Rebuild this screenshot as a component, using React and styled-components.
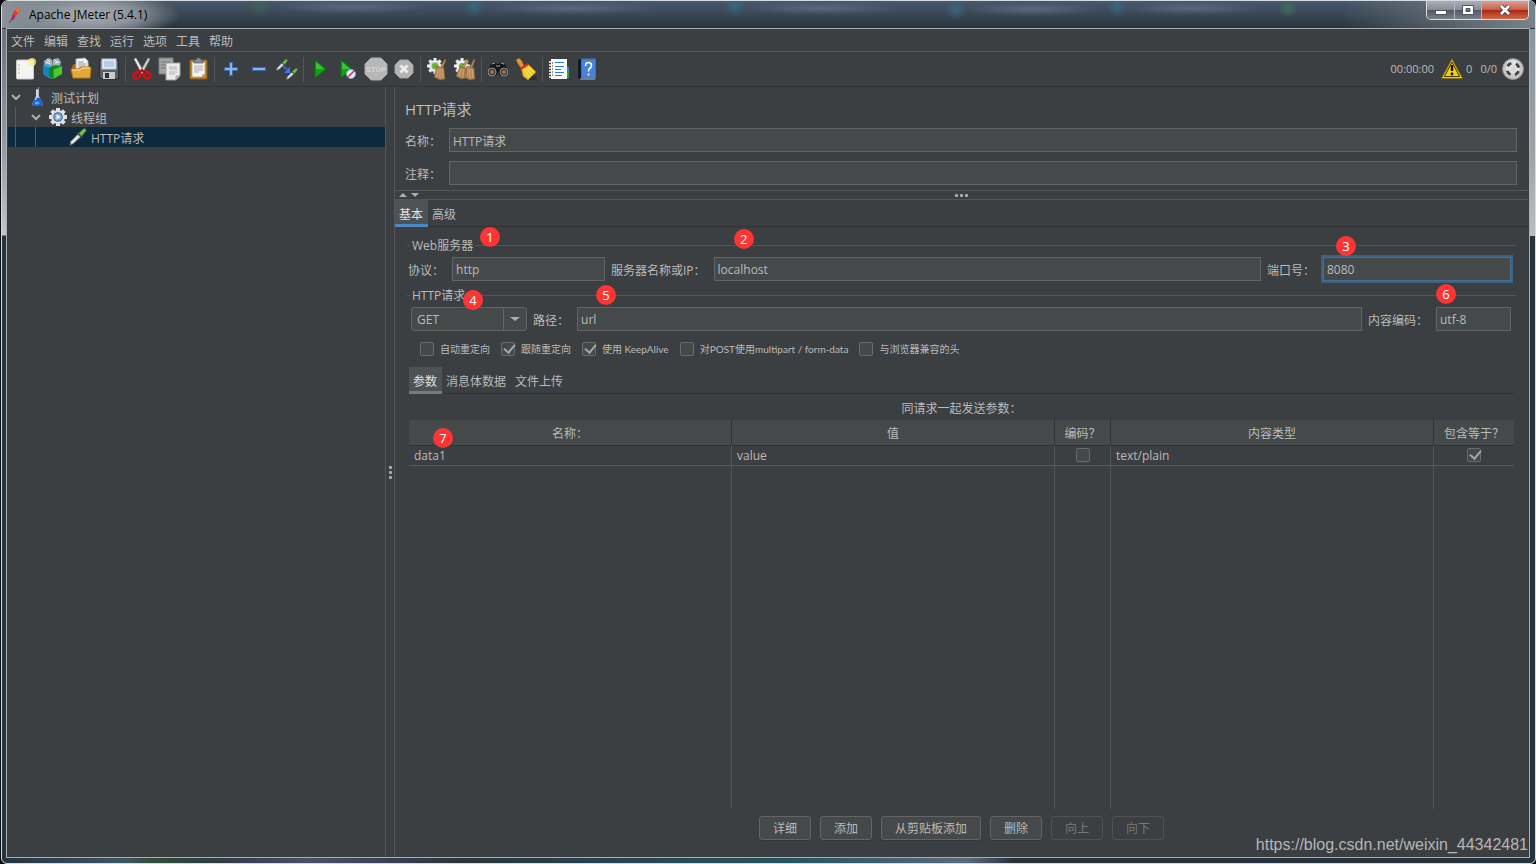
import React, { useState } from "react";
import styled, { createGlobalStyle } from "styled-components";

const GlobalStyle = createGlobalStyle`
  * { box-sizing: border-box; }
  body {
    margin: 0;
    background: #0b0d10;
    color: #bbbbbb;
    font: 12px/16px "Open Sans", "Noto Sans CJK SC", sans-serif;
  }
  button, input, select {
    font: inherit;
    color: inherit;
  }
`;

/* ---------- toolbar icons ---------- */

const NewIcon = () => (
  <svg width="24" height="24" viewBox="0 0 24 24">
    <rect x="3.500" y="3" width="17" height="19" rx="1" fill="#f4f4f2" stroke="#c9c9c6" />
    <path d="M5.5 8h1M5.5 12h1M5.5 16h1" stroke="#777" />
    <circle cx="19" cy="5" r="4" fill="#f7f0a0" opacity=".8" />
    <circle cx="19" cy="5" r="2" fill="#ffe94a" />
    <circle cx="19" cy="5" r="1" fill="#fff" />
  </svg>
);

const TemplatesIcon = () => (
  <svg width="24" height="24" viewBox="0 0 24 24">
    <path d="M4 9L3 4l5-3 3 2 1 7zM11 9l1-6 5-2 3 4-2 6z" fill="#a9b5bd" stroke="#74828c" />
    <path d="M6 2l3 3M13 2l4 4M5 5l4 2M14 6l4-1" stroke="#e9f0f4" />
    <path d="M2 8l5-1 6 4v11l-5-1-6-4z" fill="#2aa9d8" />
    <path d="M2 8l6 3v10l-6-4z" fill="#1682b8" />
    <path d="M8 11l6-3 7 1v8l-9 5-4-2z" fill="#12891e" />
    <path d="M12 13l9-4v8l-9 5z" fill="#4cc832" />
    <path d="M8 11l4 2v9" fill="none" stroke="#0b7a18" />
  </svg>
);

const OpenIcon = () => (
  <svg width="24" height="24" viewBox="0 0 24 24">
    <path d="M3 9l2-2h15v14H4z" fill="#a86d13" />
    <path d="M7 2l9-1 3 3v11H7z" fill="#f5f5f5" stroke="#aaa" />
    <path d="M9 5h6M9 7h8M9 9h8M9 11h8" stroke="#999" />
    <path d="M2 12h8l2-2h9l1 1-1 10H4z" fill="#e2a838" stroke="#b87b17" />
    <path d="M3 13h8l2-2h8" fill="none" stroke="#ffe19a" />
  </svg>
);

const SaveIcon = () => (
  <svg width="24" height="24" viewBox="0 0 24 24">
    <path d="M2.500 3h19v19H5l-2.500-2z" fill="#5d6062" stroke="#2b2d2e" />
    <rect x="5" y="2" width="14" height="10" fill="#dfeaf6" stroke="#b9c8d8" />
    <path d="M7 5h10M7 7h10M7 9h10" stroke="#8fb0d6" />
    <rect x="6" y="15" width="12" height="7" fill="#c9cccd" />
    <rect x="8" y="16" width="4" height="5" fill="#2e3133" />
  </svg>
);

const CutIcon = () => (
  <svg width="24" height="24" viewBox="0 0 24 24">
    <path d="M4 2l2-1 8 14-2 2z" fill="#f1f1f1" stroke="#999" strokeWidth=".6" />
    <path d="M20 2l-2-1-8 14 2 2z" fill="#d2d2d2" stroke="#888" strokeWidth=".6" />
    <ellipse cx="7" cy="18" rx="3" ry="3.600" transform="rotate(45 7 18)" fill="none" stroke="#d40f13" strokeWidth="2.800" />
    <ellipse cx="17" cy="18" rx="3" ry="3.600" transform="rotate(-45 17 18)" fill="none" stroke="#d40f13" strokeWidth="2.800" />
    <path d="M9 16l3-3 3 3" fill="none" stroke="#b00c10" strokeWidth="2" />
  </svg>
);

const CopyIcon = () => (
  <svg width="24" height="24" viewBox="0 0 24 24">
    <path d="M1 1h14v16H1z" fill="#a3a4a1" stroke="#81827f" />
    <path d="M3 5h9M3 8h9M3 11h6" stroke="#777" />
    <path d="M8 6h14v13l-4 4H8z" fill="#ececea" stroke="#a0a09d" />
    <path d="M11 10h8M11 12h8M11 15h8M11 17h6" stroke="#b0b0ae" />
    <path d="M18 23v-4h4z" fill="#c5c5c3" stroke="#8b8b88" strokeWidth=".7" />
  </svg>
);

const PasteIcon = () => (
  <svg width="24" height="24" viewBox="0 0 24 24">
    <rect x="4" y="3" width="17" height="19" rx="1" fill="#c88621" stroke="#8e5a10" />
    <path d="M6 5h13v12l-3 3H6z" fill="#f4f4f2" stroke="#999" strokeWidth=".7" />
    <path d="M8 9h9M8 11h9M8 13h9M8 15h5" stroke="#aaa" />
    <path d="M8 3h2l1-2h3l1 2h2v3H8z" fill="#8d8f8c" stroke="#555" strokeWidth=".7" />
    <path d="M16 20v-3h3z" fill="#bbb" />
  </svg>
);

const PlusIcon = () => (
  <svg width="24" height="24" viewBox="0 0 24 24">
    <path d="M10.500 5.500h3v5h5v3h-5v5h-3v-5h-5v-3h5z" fill="#8ab5ea" stroke="#3668ae" />
  </svg>
);

const MinusIcon = () => (
  <svg width="24" height="24" viewBox="0 0 24 24">
    <rect x="5.500" y="10.500" width="13" height="3" fill="#8ab5ea" stroke="#3668ae" />
  </svg>
);

const Dropper = ({ x, y, s }) => (
  <g transform={`translate(${x} ${y}) scale(${s})`}>
    <path d="M1 19l1-4 9-9 3 3-9 8z" fill="#d4d8da" stroke="#85898b" />
    <path d="M3 17l8-9" stroke="#fff" />
    <path d="M9 5l6 6" stroke="#2e4d27" strokeWidth="2" />
    <path d="M11 6l5-5q3-1 3 2l-5 6z" fill="#7cc05a" stroke="#4b8635" />
    <path d="M1 20l1-3" stroke="#4d5153" />
  </g>
);

const ToggleIcon = () => (
  <svg width="24" height="24" viewBox="0 0 24 24">
    <Dropper x={1} y={2} s={0.6} />
    <Dropper x={11} y={11} s={0.6} />
    <path d="M8 9l6 5" stroke="#2a7df0" strokeWidth="1.500" />
    <path d="M15 10v6H9z" fill="#2a7df0" />
  </svg>
);

const StartIcon = () => (
  <svg width="24" height="24" viewBox="0 0 24 24">
    <path d="M7 3l11 9L7 21z" fill="#12a016" stroke="#0b7010" />
    <path d="M8 5l8 7H8z" fill="#3fbf3b" />
  </svg>
);

const StartNoPauseIcon = () => (
  <svg width="24" height="24" viewBox="0 0 24 24">
    <path d="M5 3l11 9L5 21z" fill="#12a016" stroke="#0b7010" />
    <path d="M6 5l8 7H6z" fill="#3fbf3b" />
    <circle cx="15" cy="17" r="4.500" fill="#dfe9f8" stroke="#87a5cf" />
    <path d="M12 20l6-6" stroke="#e02727" strokeWidth="1.500" />
  </svg>
);

const StopIcon = () => (
  <svg width="24" height="24" viewBox="0 0 24 24">
    <path d="M7 1h10l6 6v10l-6 6H7l-6-6V7z" fill="#b7b7b7" stroke="#adadad" />
    <text x="12" y="15" textAnchor="middle" fontSize="8" fontWeight="700" fontFamily="Roboto, sans-serif" fill="#d5d5d5">STOP</text>
  </svg>
);

const ShutdownIcon = () => (
  <svg width="24" height="24" viewBox="0 0 24 24">
    <path d="M8 3h8l5 5v8l-5 5H8l-5-5V8z" fill="#b4b4b4" stroke="#a3a3a3" />
    <path d="M8.500 8.500l7 7M15.500 8.500l-7 7" stroke="#eee" strokeWidth="2.800" />
  </svg>
);

const GearShape = ({ cx, cy, r, fill, width = 3 }) => (
  <g>
    {[0, 45, 90, 135].map((deg) => (
      <rect
        key={deg}
        x={cx - width / 2}
        y={cy - r}
        width={width}
        height={r * 2}
        fill={fill}
        transform={`rotate(${deg} ${cx} ${cy})`}
      />
    ))}
    <circle cx={cx} cy={cy} r={r - 2} fill={fill} />
  </g>
);

const ClearIcon = () => (
  <svg width="24" height="24" viewBox="0 0 24 24">
    <GearShape cx={10} cy={9} r={8} fill="#eceded" />
    <circle cx="10" cy="9" r="4" fill="#bfc7ba" />
    <circle cx="10" cy="9" r="3" fill="#67b62b" />
    <path d="M20 2l1 1-3 7-2-1z" fill="#c89a5c" stroke="#7a5527" strokeWidth=".6" />
    <path d="M12 9l7 2 1 11-5 1-6-3z" fill="#b3875a" stroke="#7c5a35" strokeWidth=".6" />
    <path d="M13 12l-1 8M15 12v9M17 12l1 9" stroke="#cfa878" />
  </svg>
);

const ClearAllIcon = () => (
  <svg width="24" height="24" viewBox="0 0 24 24">
    <GearShape cx={9} cy={9} r={8} fill="#eceded" />
    <circle cx="9" cy="9" r="3" fill="#67b62b" />
    <path d="M14 2l1 1-4 8-2-1zM21 2l1 1-3 8-2-1z" fill="#c89a5c" stroke="#7a5527" strokeWidth=".6" />
    <path d="M7 10l6 1 1 10-6 1-5-3zM14 9l7 2 1 11-5 1-6-3z" fill="#b3875a" stroke="#7c5a35" strokeWidth=".6" />
    <path d="M8 12l-2 7M10 12v8M15 12l-1 8M17 12v9M19 12l1 9" stroke="#cfa878" />
  </svg>
);

const SearchIcon = () => (
  <svg width="24" height="24" viewBox="0 0 24 24">
    <path d="M5 7l4-2 2 2h2l2-2 4 2 4 8-3 4h-6l-2-4-2 4H4l-3-3z" fill="#161718" />
    <path d="M6 7l3-1M15 6l3 1M10 9h4" stroke="#a7a9aa" />
    <circle cx="6" cy="15" r="4" fill="#403b38" stroke="#8e9194" />
    <circle cx="18" cy="15" r="4" fill="#403b38" stroke="#8e9194" />
    <circle cx="6" cy="15" r="2" fill="#b26d47" />
    <circle cx="18" cy="15" r="2" fill="#b26d47" />
  </svg>
);

const BroomIcon = () => (
  <svg width="24" height="24" viewBox="0 0 24 24">
    <ellipse cx="18" cy="21" rx="5" ry="2" fill="#2b2d2e" />
    <path d="M2 3l3-2 3 3 2 5-3 2-3-4z" fill="#d99b35" stroke="#8a5a11" strokeWidth=".7" />
    <path d="M7 10l7-3 8 8-8 8-5-4z" fill="#ecc92c" stroke="#a98a10" strokeWidth=".7" />
    <path d="M10 12l5 8M12 11l6 7M14 10l6 5" stroke="#fbea78" />
    <path d="M6 11l8-5 1 2-8 5z" fill="#d92b1e" />
  </svg>
);

const FunctionIcon = () => (
  <svg width="24" height="24" viewBox="0 0 24 24">
    <rect x="18" y="10" width="4" height="5" fill="#2a87e0" />
    <rect x="18" y="15" width="4" height="6" fill="#2aa63a" />
    <rect x="4" y="2" width="16" height="20" fill="#fbfbfb" />
    <path d="M8 5.500h9M8 9.500h9M8 12.500h6M8 15.500h9M8 18.500h7" stroke="#2c7fd8" />
    <path d="M2 5h4M2 8h4M2 11h4M2 14h4M2 17h4M2 20h4" stroke="#fff" strokeWidth="1.400" />
    <path d="M5 6h1M5 9h1M5 12h1M5 15h1M5 18h1" stroke="#222" />
  </svg>
);

const HelpIcon = () => (
  <svg width="24" height="24" viewBox="0 0 24 24">
    <path d="M3 3l2-1h3v20H4l-1-1z" fill="#111a28" />
    <rect x="6.500" y="2" width="14" height="19" fill="#4683d9" stroke="#3a70c0" />
    <path d="M5 22h15" stroke="#aab6c6" />
    <path d="M10.500 9q0-3.500 3-3.500t3 3q0 2-2 3-1 1-1 3M13.500 16.500v2" fill="none" stroke="#fff" strokeWidth="1.600" />
  </svg>
);

const WarningIcon = () => (
  <svg width="22" height="22" viewBox="0 0 22 22">
    <path d="M11 1L21.500 20.500H.5z" fill="#f6cf0c" stroke="#80700e" strokeLinejoin="round" />
    <path d="M11 4L18.500 18.500H3.500z" fill="none" stroke="#3c3708" />
    <path d="M11 7v6" stroke="#111" strokeWidth="2.400" />
    <circle cx="11" cy="16" r="1.400" fill="#111" />
  </svg>
);

const RemoteIcon = () => (
  <svg width="24" height="24" viewBox="0 0 24 24">
    <circle cx="12" cy="12" r="10.500" fill="#c6c6c6" stroke="#8b8b8b" />
    <circle cx="12" cy="10" r="7" fill="#e2e2e2" />
    <circle cx="12" cy="12" r="6" fill="none" stroke="#3e4142" strokeWidth="2.800" strokeDasharray="4.600 4.825" strokeDashoffset="-2.400" />
    <circle cx="12" cy="12" r="3" fill="#d9d9d9" />
  </svg>
);

/* ---------- other drawings ---------- */

const FeatherIcon = () => (
  <svg width="14" height="18" viewBox="0 0 14 18">
    <path d="M3 14L6 5l5-4 1 1-2 5-5 7z" fill="#dd3a34" />
    <path d="M7 4l4-3 1 1-2 5z" fill="#f0722b" />
    <path d="M3 14l2-6 2 3-2 3z" fill="#a8246f" />
    <path d="M1 17l3-4" stroke="#4a3560" />
  </svg>
);

const FlaskIcon = () => (
  <svg width="20" height="20" viewBox="0 0 20 20">
    <path d="M8 2h3v7l4 8q0 2-2 2H6q-2 0-2-2l4-8z" fill="#a9bccb" />
    <path d="M7 11h5l3 6q0 2-2 2H6q-2 0-2-2z" fill="#1666c8" />
    <path d="M9 3v7l-2 3" fill="none" stroke="#f2f6fa" />
    <path d="M11 0L10 3" stroke="#8b9297" />
    <ellipse cx="9" cy="16" rx="2.500" ry="1.500" fill="#5ea4f4" />
  </svg>
);

const ThreadGroupIcon = () => (
  <svg width="20" height="20" viewBox="0 0 20 20">
    <GearShape cx={10} cy={10} r={9} fill="#dfe2e4" width={4} />
    <circle cx="10" cy="10" r="4.800" fill="#3b6294" />
    <circle cx="10" cy="10" r="3.800" fill="#86a9d4" />
    <path d="M8.500 7.500l4 2.500-4 2.500z" fill="#fff" />
  </svg>
);

const SamplerIcon = () => (
  <svg width="20" height="20" viewBox="0 0 20 20">
    <Dropper x={1} y={1} s={0.9} />
  </svg>
);

const Chevron = () => (
  <svg width="16" height="12" viewBox="0 0 16 12">
    <path d="M4 4l4 4 4-4" fill="none" stroke="#adadad" strokeWidth="2" />
  </svg>
);

const Caret = ({ up, size = 8 }) => (
  <svg width={size} height="6" viewBox="0 0 8 6" preserveAspectRatio="none">
    <path d={up ? "M0 5h8L4 1z" : "M0 1h8L4 5z"} fill="#adadad" />
  </svg>
);

/* ---------- data ---------- */

const menus = ["文件", "编辑", "查找", "运行", "选项", "工具", "帮助"];

const toolGroups = [
  [["新建", NewIcon], ["模板", TemplatesIcon], ["打开", OpenIcon], ["保存", SaveIcon]],
  [["剪切", CutIcon], ["复制", CopyIcon], ["粘贴", PasteIcon]],
  [["展开", PlusIcon], ["折叠", MinusIcon], ["切换", ToggleIcon]],
  [["启动", StartIcon], ["不停顿启动", StartNoPauseIcon], ["停止", StopIcon], ["关闭", ShutdownIcon]],
  [["清除", ClearIcon], ["清除全部", ClearAllIcon]],
  [["搜索", SearchIcon], ["重置搜索", BroomIcon]],
  [["函数助手", FunctionIcon], ["帮助", HelpIcon]],
];

const treeNodes = [
  { label: "测试计划", level: 0, open: true, Icon: FlaskIcon },
  { label: "线程组", level: 1, open: true, Icon: ThreadGroupIcon },
  { label: "HTTP请求", level: 2, selected: true, Icon: SamplerIcon },
];

const options = [
  ["自动重定向", false],
  ["跟随重定向", true],
  ["使用 KeepAlive", true],
  ["对POST使用multipart / form-data", false],
  ["与浏览器兼容的头", false],
];

const actions = [
  ["详细"],
  ["添加"],
  ["从剪贴板添加"],
  ["删除"],
  ["向上", true],
  ["向下", true],
];

const App = () => {
  const [method, setMethod] = useState("GET");

  return (
    <Frame>
      <GlobalStyle />
      <TitleBar>
        <FeatherIcon />
        <Title>Apache JMeter (5.4.1)</Title>
        <WindowButtons>
          <WindowButton aria-label="最小化" $width={27}>
            <svg width="12" height="12" viewBox="0 0 12 12">
              <rect x=".5" y="6.500" width="11" height="4" fill="#fff" stroke="#50545e" />
            </svg>
          </WindowButton>
          <WindowButton aria-label="最大化" $width={27}>
            <svg width="12" height="12" viewBox="0 0 12 12">
              <path d="M.5 1.500h11v9H.5zM4 4.500v3h4v-3z" fill="#fff" fillRule="evenodd" stroke="#50545e" />
            </svg>
          </WindowButton>
          <WindowButton aria-label="关闭窗口" $width={47} $close>
            <svg width="14" height="12" viewBox="0 0 14 12">
              <path d="M3 2l8 8M11 2l-8 8" stroke="#50404a" strokeWidth="4.500" />
              <path d="M3 2l8 8M11 2l-8 8" stroke="#fff" strokeWidth="2.500" />
            </svg>
          </WindowButton>
        </WindowButtons>
      </TitleBar>

      <Client>
        <MenuBar>
          {menus.map((m) => (
            <MenuItem key={m}>{m}</MenuItem>
          ))}
        </MenuBar>

        <Toolbar>
          {toolGroups.map((group, i) => (
            <ToolGroup key={i}>
              {group.map(([label, Icon]) => (
                <ToolButton key={label} aria-label={label}>
                  <Icon />
                </ToolButton>
              ))}
            </ToolGroup>
          ))}
          <Status>
            <Elapsed>00:00:00</Elapsed>
            <WarningIcon />
            <Count>0</Count>
            <Count $wide>0/0</Count>
            <RemoteIcon />
          </Status>
        </Toolbar>

        <Main>
          <Tree>
            {treeNodes.map(({ label, level, open, selected, Icon }) => (
              <TreeRow key={label} $selected={selected}>
                {Array.from({ length: level }, (_, i) => (
                  <Guide key={i} />
                ))}
                <Toggle>{open && <Chevron />}</Toggle>
                <Icon />
                <TreeLabel>{label}</TreeLabel>
              </TreeRow>
            ))}
          </Tree>

          <Splitter>
            <Dot /><Dot /><Dot />
          </Splitter>

          <Panel>
            <PanelTitle>HTTP请求</PanelTitle>
            <HeadRow>
              <Label htmlFor="name">名称：</Label>
              <TextInput id="name" defaultValue="HTTP请求" />
            </HeadRow>
            <HeadRow>
              <Label htmlFor="comment">注释：</Label>
              <TextInput id="comment" />
            </HeadRow>

            <HSplitter>
              <Carets>
                <Caret up />
                <Caret />
              </Carets>
              <Dot /><Dot /><Dot />
            </HSplitter>

            <Tabs>
              <Tab $active $color="#4a88c7">基本</Tab>
              <Tab>高级</Tab>
            </Tabs>

            <Group>
              <GroupTitle>Web服务器</GroupTitle>
              <Row>
                <Label htmlFor="protocol">协议：</Label>
                <Field $width={153}>
                  <TextInput id="protocol" defaultValue="http" />
                  <Badge $x={28} $y={-30}>1</Badge>
                </Field>
                <Label htmlFor="host">服务器名称或IP：</Label>
                <Field>
                  <TextInput id="host" defaultValue="localhost" />
                  <Badge $x={20} $y={-28}>2</Badge>
                </Field>
                <Label htmlFor="port">端口号：</Label>
                <Field $width={188}>
                  <TextInput id="port" defaultValue="8080" $focused />
                  <Badge $x={13} $y={-21}>3</Badge>
                </Field>
              </Row>
            </Group>

            <Group>
              <GroupTitle>HTTP请求</GroupTitle>
              <Row $indent>
                <Field $width={116}>
                  <Select aria-label="方法" value={method} onChange={(e) => setMethod(e.target.value)}>
                    <option>GET</option>
                    <option>POST</option>
                    <option>PUT</option>
                    <option>DELETE</option>
                  </Select>
                  <SelectArrow>
                    <Caret size={10} />
                  </SelectArrow>
                  <Badge $x={52} $y={-17}>4</Badge>
                </Field>
                <Label htmlFor="path">路径：</Label>
                <Field>
                  <TextInput id="path" defaultValue="url" />
                  <Badge $x={19} $y={-22}>5</Badge>
                </Field>
                <Label htmlFor="encoding">内容编码：</Label>
                <Field $width={75}>
                  <TextInput id="encoding" defaultValue="utf-8" />
                  <Badge $x={0} $y={-23}>6</Badge>
                </Field>
              </Row>
            </Group>

            <Options>
              {options.map(([label, checked]) => (
                <Option key={label}>
                  <Checkbox type="checkbox" defaultChecked={checked} />
                  {label}
                </Option>
              ))}
            </Options>

            <Params>
              <Tabs>
                <Tab $active $color="#747a80">参数</Tab>
                <Tab>消息体数据</Tab>
                <Tab>文件上传</Tab>
              </Tabs>
              <TableTitle>同请求一起发送参数：</TableTitle>
              <Table>
                <thead>
                  <tr>
                    <Th>
                      名称：
                      <Badge $x={24} $y={8}>7</Badge>
                    </Th>
                    <Th>值</Th>
                    <Th $width={56}>编码？</Th>
                    <Th>内容类型</Th>
                    <Th $width={80}>包含等于？</Th>
                  </tr>
                </thead>
                <tbody>
                  <tr>
                    <Td>data1</Td>
                    <Td>value</Td>
                    <Td $center><Checkbox type="checkbox" aria-label="编码" /></Td>
                    <Td>text/plain</Td>
                    <Td $center><Checkbox type="checkbox" aria-label="包含等于" defaultChecked /></Td>
                  </tr>
                  <tr>
                    <Filler /><Filler /><Filler /><Filler /><Filler />
                  </tr>
                </tbody>
              </Table>
              <Actions>
                {actions.map(([label, disabled]) => (
                  <ActionButton key={label} disabled={disabled}>{label}</ActionButton>
                ))}
              </Actions>
            </Params>
          </Panel>
        </Main>
      </Client>
      <Watermark>https://blog.csdn.net/weixin_44342481</Watermark>
    </Frame>
  );
};
export default App;

/* ---------- window ---------- */

const Frame = styled.div`
  position: relative;
  display: flex;
  flex-direction: column;
  min-height: 100vh;
  padding: 0 5px 5px 4px;
  margin-left: 1px;
  border: 1px solid #d5dbe0;
  border-radius: 7px 7px 6px 6px;
  background:
    linear-gradient(#8c949c 0, #9da2a7 120px, #c4c6c8 234px, transparent 235px) no-repeat 100% 28px / 5px 207px,
    linear-gradient(#6b747e 0, #979ca2 120px, #c4c6c8 206px, transparent 207px) no-repeat 0 28px / 4px 207px,
    linear-gradient(90deg, #26323c, #3d5564 8%, #35493a 10%, #2c3b45 14%, #4b5064 20%, #28343e 30%, #28555e 52%, #5b6a7c 63%, #25313b 66%, #26323c);
`;

const TitleBar = styled.header`
  display: flex;
  align-items: center;
  height: 27px;
  margin: 0 -5px 0 -4px;
  padding-left: 6px;
  border-radius: 6px 6px 0 0;
  background:
    radial-gradient(ellipse 90px 24px at 88px 14px, #a9aeb3 0, #8b9299 50%, transparent 100%),
    radial-gradient(circle at 258px 4px, #3d6156 0, transparent 12px),
    radial-gradient(circle at 472px 5px, #37657f 0, transparent 11px),
    radial-gradient(circle at 733px 5px, #37657f 0, transparent 11px),
    radial-gradient(circle at 954px 8px, #37657f 0, transparent 11px),
    radial-gradient(circle at 1115px 5px, #37657f 0, transparent 11px),
    radial-gradient(circle at 1286px 7px, #3d6f5e 0, transparent 10px),
    radial-gradient(ellipse 80px 7px at 350px 6px, #5a6878, transparent),
    radial-gradient(ellipse 90px 7px at 570px 7px, #5a6878, transparent),
    radial-gradient(ellipse 80px 7px at 820px 7px, #5a6878, transparent),
    radial-gradient(ellipse 70px 7px at 1030px 8px, #5a6878, transparent),
    radial-gradient(ellipse 70px 7px at 1190px 7px, #5a6878, transparent),
    linear-gradient(90deg, #8b9299 0, transparent 160px, transparent 1340px, #7b838a 100%),
    linear-gradient(#48586a, #36444f 60%, #28333d);
`;

const Title = styled.h1`
  margin: 0 auto 0 7px;
  color: #000;
  font-size: 12px;
  font-weight: 400;
`;

const WindowButtons = styled.div`
  display: flex;
  align-self: flex-start;
  margin-right: 6px;
  border: 1px solid #d9dde0;
  border-top: 0;
  border-radius: 0 0 5px 5px;
  overflow: hidden;
`;

const WindowButton = styled.button`
  display: flex;
  align-items: center;
  justify-content: center;
  width: ${(p) => p.$width}px;
  height: 18px;
  padding: 0;
  border: 0;
  border-left: 1px solid #b3b8bd;
  background: ${(p) =>
    p.$close
      ? "linear-gradient(#dba194, #c8604c 48%, #a92a14 52%, #cf6a42)"
      : "linear-gradient(#aab0b6, #868d95 48%, #525b65 52%, #79828b)"};
  &:first-child {
    border-left: 0;
  }
`;

const Client = styled.div`
  flex: 1;
  display: flex;
  flex-direction: column;
  padding: 0 1px;
  border: 1px solid #a5aeb6;
  background: #3c3f41;
`;

const MenuBar = styled.nav`
  display: flex;
  gap: 9px;
  height: 23px;
  padding: 3px 3px 0;
  border-bottom: 1px solid #555555;
`;

const MenuItem = styled.button`
  padding: 0;
  border: 0;
  background: none;
`;

const Toolbar = styled.div`
  display: flex;
  align-items: center;
  height: 35px;
  padding: 0 3px;
  border-bottom: 1px solid #323232;
`;

const ToolGroup = styled.div`
  display: flex;
  align-items: center;
  & + &::before {
    content: "";
    width: 1px;
    height: 25px;
    margin: 0 2px;
    background: #555555;
  }
`;

const ToolButton = styled.button`
  display: flex;
  justify-content: center;
  width: 28px;
  padding: 0;
  border: 0;
  background: none;
`;

const Status = styled.div`
  display: flex;
  align-items: center;
  margin-left: auto;
`;

const Elapsed = styled.span`
  margin-right: 7px;
  font-size: 11px;
`;

const Count = styled.span`
  margin: ${(p) => (p.$wide ? "0 4px 0 8px" : "0 0 0 3px")};
  font-size: 11px;
`;

const Main = styled.main`
  flex: 1;
  display: flex;
`;

/* ---------- tree ---------- */

const Tree = styled.ul`
  width: 377px;
  margin: 0;
  padding: 0;
  list-style: none;
`;

const TreeRow = styled.li`
  display: flex;
  align-items: center;
  height: 20px;
  background: ${(p) => (p.$selected ? "#0d293e" : "none")};
`;

const Guide = styled.span`
  align-self: stretch;
  width: 13px;
  margin-left: 7px;
  border-left: 1px solid #555b5e;
`;

const Toggle = styled.span`
  display: flex;
  width: 20px;
`;

const TreeLabel = styled.span`
  padding: 3px 0 0 3px;
`;

const Splitter = styled.div`
  display: flex;
  flex-direction: column;
  align-items: center;
  justify-content: center;
  gap: 2px;
  width: 10px;
  border: solid #555555;
  border-width: 0 1px;
`;

const Dot = styled.span`
  width: 3px;
  height: 3px;
  border-radius: 1px;
  background: #adadad;
`;

/* ---------- request panel ---------- */

const Panel = styled.section`
  flex: 1;
  min-width: 0;
  display: flex;
  flex-direction: column;
`;

const PanelTitle = styled.h2`
  margin: 11px 10px 8px;
  font-size: 15px;
  line-height: 22px;
  font-weight: 400;
`;

const HeadRow = styled.div`
  display: flex;
  align-items: center;
  padding: 0 11px 0 4px;
  margin-bottom: 9px;
`;

const Label = styled.label`
  flex: none;
  padding: 3px 8px 0 6px;
`;

const TextInput = styled.input`
  flex: 1;
  width: 100%;
  min-width: 0;
  height: 24px;
  padding: 1px 4px 0 3px;
  border: 1px solid ${(p) => (p.$focused ? "#466d94" : "#646464")};
  border-radius: 0;
  background: #45494a;
  outline: 0;
  box-shadow: ${(p) => (p.$focused ? "0 0 0 2px #3d6185" : "none")};
`;

const HSplitter = styled.div`
  position: relative;
  display: flex;
  align-items: center;
  justify-content: center;
  gap: 2px;
  height: 10px;
  margin-top: -4px;
  border: solid #555555;
  border-width: 1px 0;
`;

const Carets = styled.div`
  position: absolute;
  left: 4px;
  display: flex;
  gap: 4px;
`;

const Tabs = styled.div`
  display: flex;
  height: 27px;
  border-bottom: 1px solid #323232;
`;

const Tab = styled.button`
  height: 27px;
  padding: 5px 5px 0 4px;
  border: 0;
  border-bottom: 3px solid ${(p) => (p.$active ? p.$color : "transparent")};
  background: ${(p) => (p.$active ? "#4e5254" : "none")};
  color: ${(p) => (p.$active ? "#e0e0e0" : "inherit")};
`;

const Group = styled.fieldset`
  min-width: 0;
  margin: 0 12px;
  padding: 0;
  border: 0;
  & + & {
    margin-top: -4px;
  }
`;

const GroupTitle = styled.legend`
  display: flex;
  align-items: center;
  gap: 2px;
  width: 100%;
  height: 30px;
  padding: 7px 0 0;
  &::before,
  &::after {
    content: "";
    width: 3px;
    height: 1px;
    background: #555555;
  }
  &::after {
    flex: 1;
  }
`;

const Row = styled.div`
  display: flex;
  align-items: center;
  padding: 0 5px 0 ${(p) => (p.$indent ? 4 : 0)}px;
  & > label:first-child {
    padding-left: 1px;
  }
`;

const Field = styled.div`
  position: relative;
  display: flex;
  flex: ${(p) => (p.$width ? `0 0 ${p.$width}px` : "1")};
`;

const Select = styled.select`
  width: 100%;
  height: 24px;
  padding: 1px 5px 0;
  border: 1px solid #646464;
  border-radius: 3px;
  background: #45494a;
  appearance: none;
  outline: 0;
`;

const SelectArrow = styled.span`
  position: absolute;
  top: 1px;
  right: 1px;
  bottom: 1px;
  display: flex;
  align-items: center;
  justify-content: center;
  width: 23px;
  border-left: 1px solid #646464;
  pointer-events: none;
`;

const Badge = styled.span`
  position: absolute;
  z-index: 1;
  left: ${(p) => p.$x}px;
  top: ${(p) => p.$y}px;
  width: 20px;
  height: 20px;
  border-radius: 50%;
  background: #fd3535;
  color: #fff;
  font-size: 13px;
  line-height: 20px;
  text-align: center;
`;

const Options = styled.div`
  display: flex;
  gap: 11px;
  margin: 10px 25px;
`;

const Option = styled.label`
  display: flex;
  align-items: center;
  gap: 6px;
  font-family: Lato, "Noto Sans CJK SC", sans-serif;
  font-size: 10px;
`;

const Checkbox = styled.input`
  position: relative;
  flex: none;
  width: 14px;
  height: 14px;
  margin: 0;
  border: 1px solid #6b6b6b;
  border-radius: 2px;
  background: #43494a;
  appearance: none;
  &:checked::after {
    content: "";
    position: absolute;
    left: 4px;
    top: 0;
    width: 5px;
    height: 9px;
    border: solid #a7a7a7;
    border-width: 0 2px 2px 0;
    transform: translateY(-1px) rotate(40deg);
  }
`;

const Params = styled.div`
  flex: 1;
  display: flex;
  flex-direction: column;
  margin: 0 14px;
`;

const TableTitle = styled.div`
  padding: 7px 0 3px;
  text-align: center;
`;

const Table = styled.table`
  flex: 1;
  width: 100%;
  table-layout: fixed;
  border-collapse: separate;
  border-spacing: 0;
`;

const Th = styled.th`
  position: relative;
  width: ${(p) => (p.$width ? `${p.$width}px` : "auto")};
  height: 26px;
  padding: 3px 0 0;
  border: solid #323232;
  border-width: 0 1px 1px 0;
  background: #45494a;
  font-weight: 400;
  &:last-child {
    border-right: 0;
  }
`;

const Td = styled.td`
  height: 20px;
  padding: ${(p) => (p.$center ? "0" : "0 5px")};
  border: solid #555555;
  border-width: 0 1px 1px 0;
  text-align: ${(p) => (p.$center ? "center" : "left")};
  line-height: 18px;
  & > input {
    display: block;
    margin: 0 auto 2px;
  }
  &:last-child {
    border-right: 0;
  }
`;

const Filler = styled.td`
  height: 343px;
  padding: 0;
  border-right: 1px solid #555555;
  &:last-child {
    border-right: 0;
  }
`;

const Actions = styled.div`
  display: flex;
  justify-content: center;
  gap: 9px;
  padding: 7px 0 17px;
`;

const ActionButton = styled.button`
  height: 24px;
  padding: 2px 13px 0;
  border: 1px solid #646464;
  border-radius: 3px;
  background: #45494a;
  box-shadow: 0 1px 0 #353739;
  &:disabled {
    border-color: #515151;
    background: none;
    box-shadow: none;
    color: #777777;
  }
`;

const Watermark = styled.div`
  position: absolute;
  right: 7px;
  bottom: 9px;
  color: #b4b6b7;
  font: 16px/18px "Liberation Sans", sans-serif;
`;
